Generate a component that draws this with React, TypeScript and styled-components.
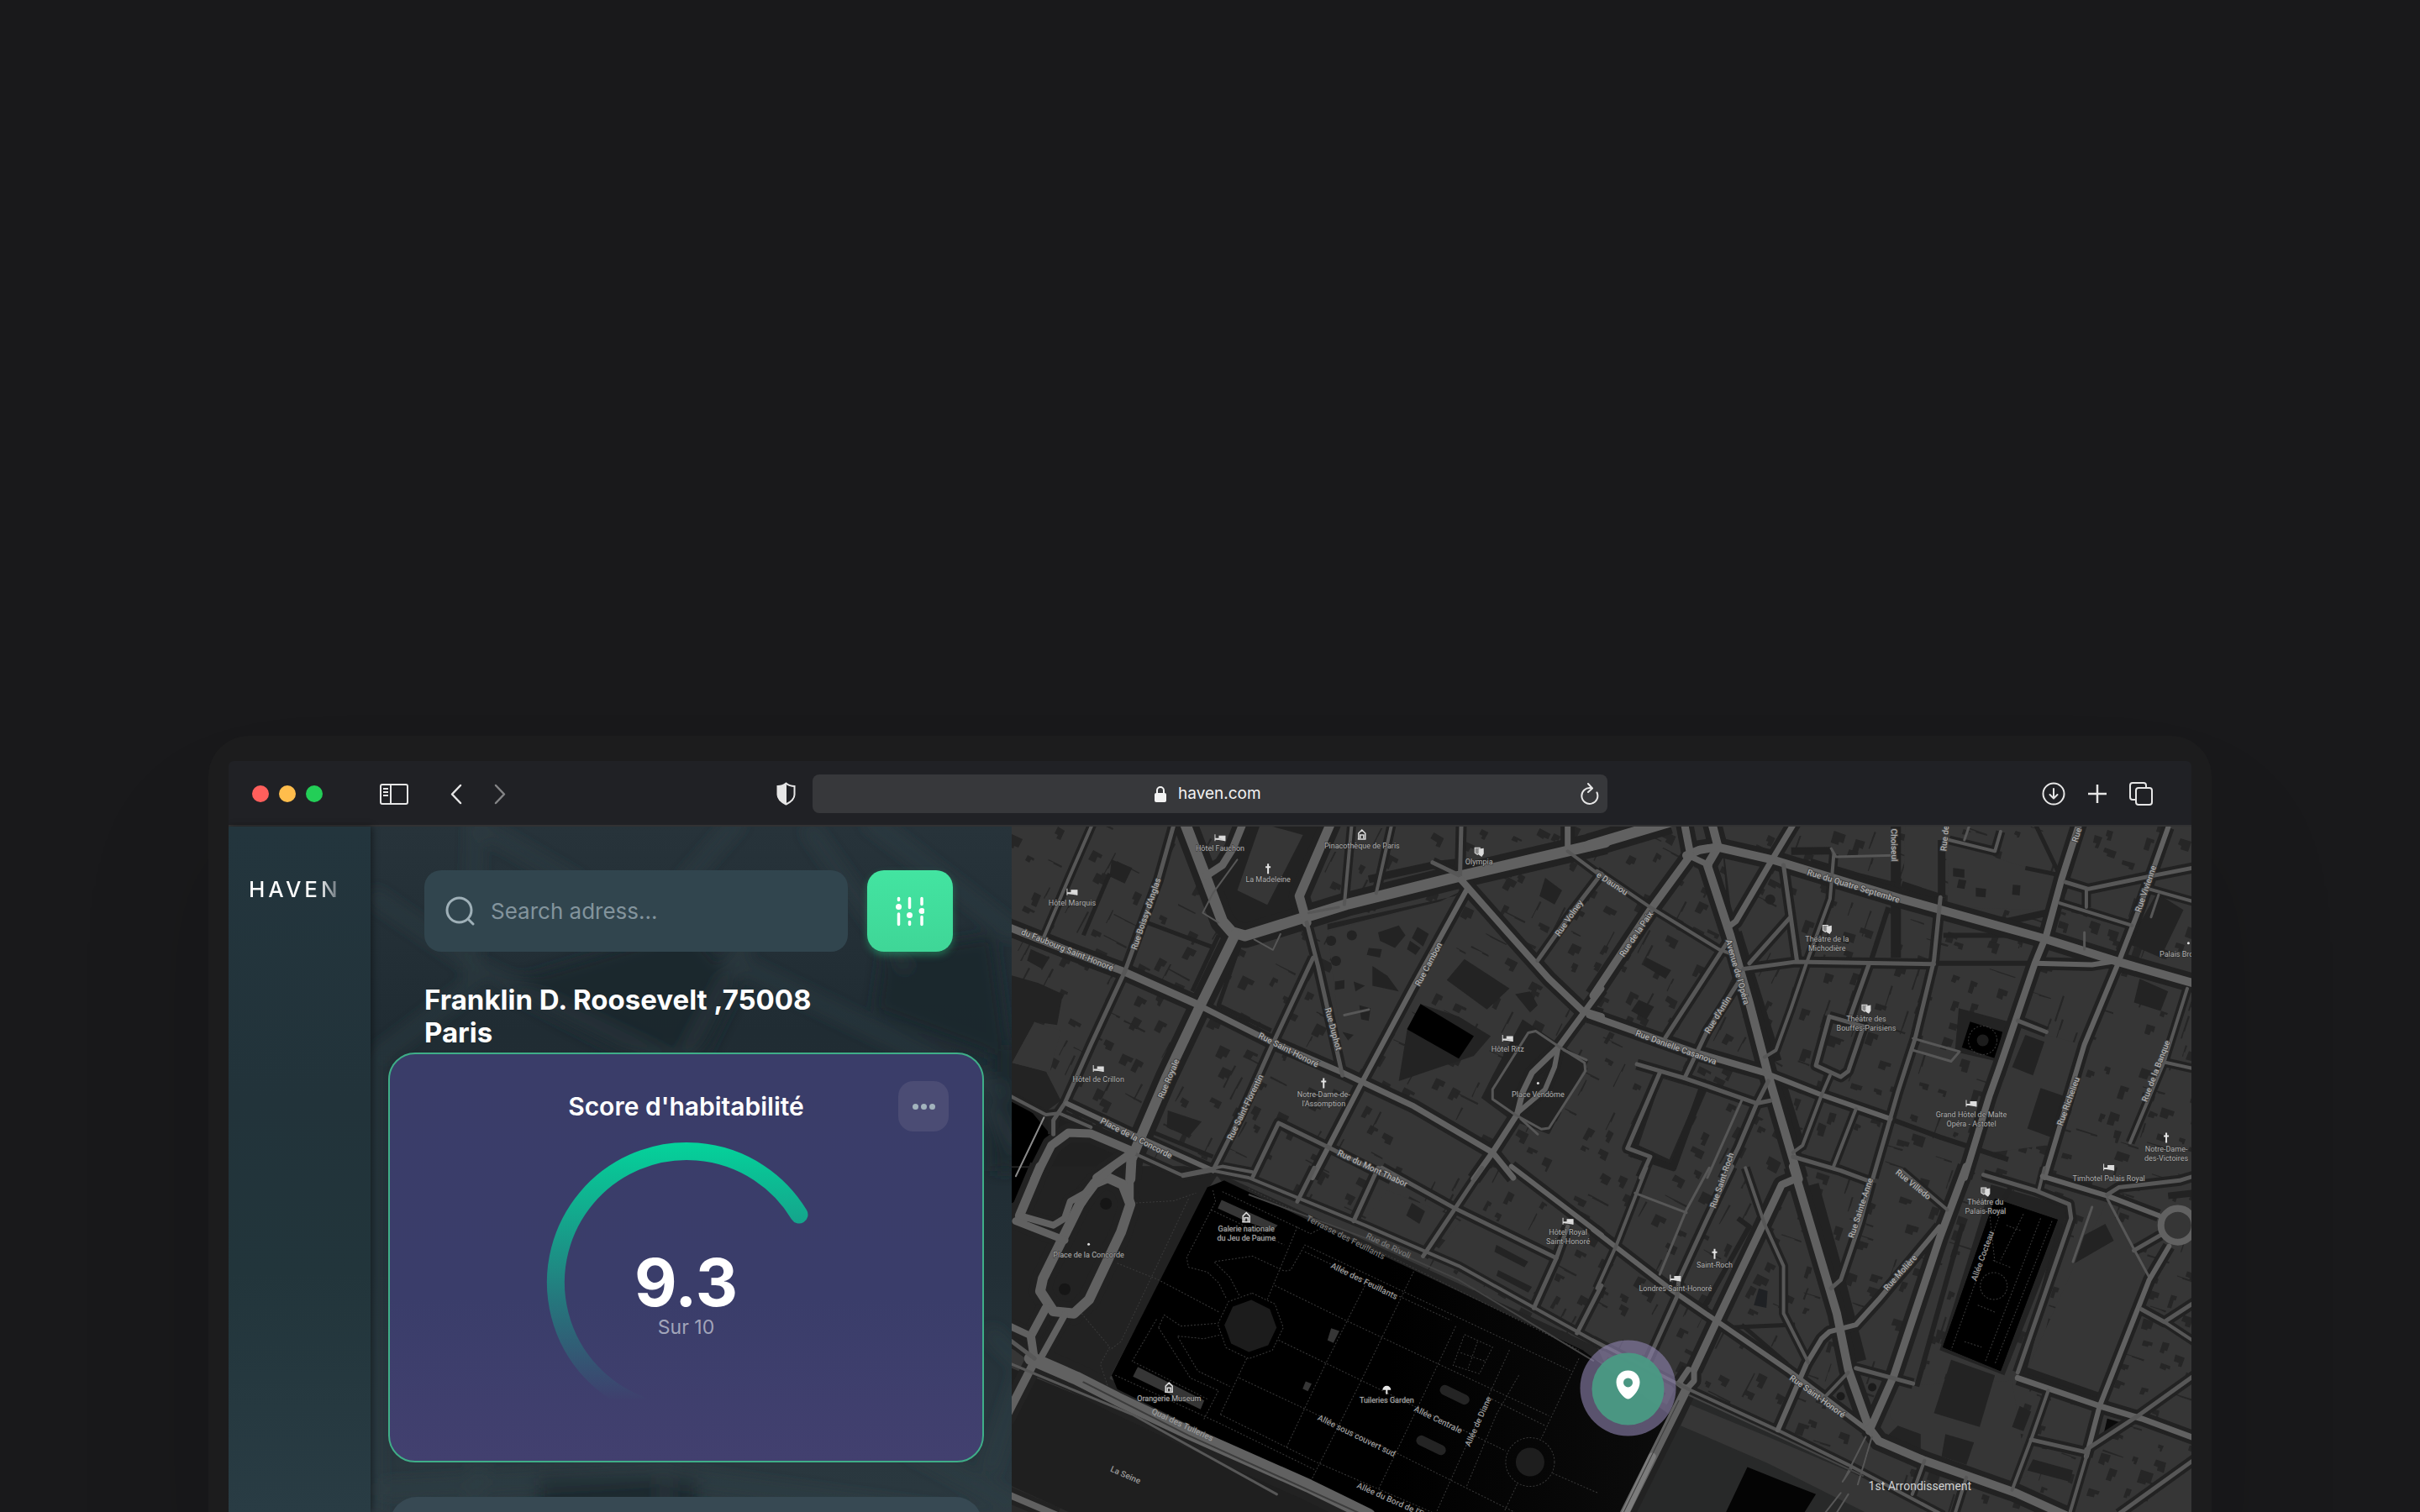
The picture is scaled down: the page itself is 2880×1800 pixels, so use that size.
import React from "react";
import styled, { createGlobalStyle } from "styled-components";

const GlobalStyle = createGlobalStyle`
  *, *::before, *::after { box-sizing: border-box; }
  body {
    margin: 0;
    background: #19191b;
    color: #ffffff;
    font-family: Inter, "Liberation Sans", sans-serif;
  }
`;

/* ---------- Page and window ---------- */

const Stage = styled.main`
  display: flex;
  flex-direction: column;
  height: 100vh;
  padding: 876px 248px 0;
  overflow: hidden;
`;

const Bezel = styled.div`
  display: flex;
  flex: 1;
  min-height: 0;
  padding: 30px 24px 0;
  border-radius: 48px 48px 0 0;
  background: #1c1c1d;
  box-shadow: 0 120px 160px rgba(0, 0, 0, 0.14);
`;

const Browser = styled.div`
  display: flex;
  flex: 1;
  flex-direction: column;
  min-width: 0;
  overflow: hidden;
  border-radius: 6px 6px 0 0;
  background: #202125;
`;

const Toolbar = styled.header`
  display: grid;
  grid-template-columns: minmax(0, 1fr) minmax(0, 946px) minmax(0, 1fr);
  align-items: center;
  flex: none;
  height: 78px;
  padding-top: 2px;
  border-bottom: 2px solid #323233;
`;

const ToolbarLeft = styled.div`
  display: flex;
  align-items: center;
  padding: 0 20px 0 28px;
`;

const ToolbarRight = styled.div`
  display: flex;
  align-items: center;
  justify-content: flex-end;
  gap: 26px;
  padding-right: 46px;
`;

const Lights = styled.div`
  display: flex;
  gap: 12px;
  margin-right: 68px;
`;

const Light = styled.button<{ $color: string }>`
  width: 20px;
  height: 20px;
  padding: 0;
  border: 0;
  border-radius: 50%;
  background: ${(p) => p.$color};
`;

const NavButtons = styled.div`
  display: flex;
  gap: 38px;
  margin: 0 auto 0 50px;
`;

const IconButton = styled.button<{ $dim?: boolean }>`
  display: flex;
  padding: 0;
  border: 0;
  background: none;
  color: #e6e6e6;
  opacity: ${(p) => (p.$dim ? 0.5 : 1)};
`;

const AddressBar = styled.div`
  display: grid;
  grid-template-columns: 1fr auto 1fr;
  align-items: center;
  height: 46px;
  padding: 0 10px;
  border-radius: 8px;
  background: #37383b;
`;

const AddressLabel = styled.label`
  display: flex;
  grid-column: 2;
  align-items: center;
  gap: 14px;
  color: #f2f2f2;
`;

const AddressInput = styled.input`
  width: 104px;
  padding: 0;
  border: 0;
  outline: 0;
  background: none;
  color: #f2f2f2;
  font: 400 19px/26px Inter, "Liberation Sans", sans-serif;
`;

const ReloadSlot = styled.div`
  display: flex;
  justify-content: flex-end;
`;

/* ---------- Application ---------- */

const AppShell = styled.div`
  display: grid;
  grid-template-columns: 169px minmax(0, 763px) minmax(0, 1fr);
  flex: 1;
  min-height: 0;
  background: #232323;
`;

const Sidebar = styled.nav`
  z-index: 1;
  padding: 59px 0 0 24px;
  background: linear-gradient(#23353d, #22333a 40%, #22353b 65%, #293c44);
  box-shadow: 2px 0 8px rgba(0, 0, 0, 0.45);
`;

const Brand = styled.a`
  display: inline-block;
  background: linear-gradient(90deg, #ffffff 75%, #4f5c65);
  background-clip: text;
  color: transparent;
  font-size: 26px;
  font-weight: 500;
  line-height: 32px;
  letter-spacing: 4px;
  text-decoration: none;
`;

const Panel = styled.section`
  display: grid;
  grid-template-columns: minmax(0, 1fr);
  min-width: 0;
  min-height: 0;
  overflow: hidden;
  background: linear-gradient(#27333a, #202c33 30%, #222f36 65%, #2b3940);
`;

const Backdrop = styled.svg`
  grid-area: 1 / 1;
  width: 100%;
  height: 816px;
`;

const PanelBody = styled.div`
  z-index: 1;
  grid-area: 1 / 1;
  min-width: 0;
  padding: 52px 33px 0 21px;
`;

const SearchRow = styled.form`
  display: flex;
  gap: 23px;
  padding: 0 37px 0 43px;
`;

const SearchField = styled.label`
  display: flex;
  flex: 1;
  align-items: center;
  gap: 19px;
  min-width: 0;
  height: 97px;
  padding: 0 25px;
  border-radius: 20px;
  background: #31454e;
  color: #9fb0b8;
`;

const SearchInput = styled.input`
  flex: 1;
  min-width: 0;
  padding: 0;
  border: 0;
  outline: 0;
  background: none;
  color: #ffffff;
  font: 400 26px/32px Inter, "Liberation Sans", sans-serif;

  &::placeholder {
    color: #83949d;
    opacity: 1;
  }
`;

const FilterButton = styled.button`
  display: flex;
  align-items: center;
  justify-content: center;
  width: 102px;
  height: 97px;
  padding: 0;
  border: 0;
  border-radius: 20px;
  background: linear-gradient(#43e4a1, #3fd697);
  box-shadow: 0 4px 8px rgba(40, 200, 130, 0.4);
`;

const Address = styled.h1`
  max-width: 504px;
  margin: 38px 0 4px 43px;
  font-size: 33px;
  font-weight: 700;
  line-height: 39px;
`;

const ScoreCard = styled.article`
  display: flex;
  flex-direction: column;
  align-items: center;
  height: 488px;
  border: 2px solid #3fae88;
  border-radius: 32px;
  background: linear-gradient(#3a3d69, #3a3d6a 60%, #42406f);
`;

const CardHeader = styled.div`
  display: grid;
  grid-template-columns: 60px 1fr 60px;
  align-items: center;
  align-self: stretch;
  padding: 32px 40px 12px;
`;

const CardTitle = styled.h2`
  grid-column: 2;
  margin: 0;
  font-size: 30px;
  font-weight: 600;
  line-height: 36px;
  text-align: center;
`;

const MoreButton = styled.button`
  display: flex;
  align-items: center;
  justify-content: center;
  gap: 3px;
  height: 60px;
  padding: 0;
  border: 0;
  border-radius: 18px;
  background: #4b4c74;
`;

const Dot = styled.span`
  width: 7px;
  height: 7px;
  border-radius: 50%;
  background: #a3b4bd;
`;

const GaugeArea = styled.div`
  display: grid;
  justify-items: center;
`;

const GaugeArc = styled.svg`
  grid-area: 1 / 1;
  width: 334px;
  height: 334px;
`;

const Readout = styled.div`
  display: flex;
  grid-area: 1 / 1;
  flex-direction: column;
  align-items: center;
  padding-top: 128px;
`;

const ScoreValue = styled.strong`
  font-size: 78px;
  font-weight: 700;
  line-height: 80px;
`;

const ScoreScale = styled.span`
  color: #a2a5ba;
  font-size: 23px;
  line-height: 26px;
`;

const NextCard = styled.article`
  height: 240px;
  margin: 41px 2px 0;
  border-radius: 32px;
  background: #374953;
`;

const MapCanvas = styled.svg`
  display: block;
  width: 100%;
  height: 816px;
`;

const StreetText = styled.text<{ $faint?: boolean }>`
  fill: ${(p) => (p.$faint ? "#747474" : "#aeaeae")};
  stroke: ${(p) => (p.$faint ? "none" : "#404040")};
  stroke-width: 2px;
  paint-order: stroke;
  font: 500 10px Roboto, "Liberation Sans", sans-serif;
  text-anchor: middle;
`;

const ParkText = styled(StreetText)`
  fill: #9a9a9a;
  stroke: none;
`;

const PlaceText = styled.text`
  fill: #b0b0b0;
  stroke: #2a2a2a;
  stroke-width: 1px;
  paint-order: stroke;
  font: 400 9px Roboto, "Liberation Sans", sans-serif;
  text-anchor: middle;
`;

const DistrictText = styled.text`
  fill: #d2d2d2;
  font: 400 14px Roboto, "Liberation Sans", sans-serif;
  text-anchor: middle;
`;

/* ---------- Map data ---------- */

type Tile = "A" | "B" | "C" | "D";

/* Each quarter of the map keeps its own grid: origin and units per pixel. */
const tiles: Record<Tile, { x: number; y: number; sx: number }> = {
  A: { x: -4, y: -4, sx: 2.24 },
  B: { x: 696, y: -4, sx: 2.208 },
  C: { x: -4, y: 406, sx: 2.24 },
  D: { x: 696, y: 406, sx: 2.208 },
};

const project = (tile: Tile, x: number, y: number): [number, number] => {
  const t = tiles[tile];
  return [Math.round((t.x + x / t.sx) * 10) / 10, Math.round((t.y + y / 3) * 10) / 10];
};

const points = (tile: Tile, list: string) =>
  list
    .split(" ")
    .map((pair) => {
      const [x, y] = pair.split(",").map(Number);
      return project(tile, x, y).join(",");
    })
    .join(" ");

const roads: [Tile, number, string][] = [
  ["A", 13, "1590,68 1200,190 900,290 630,402 595,388 570,350 525,190 465,-20"],
  ["A", 11, "862,-10 775,260 795,355"],
  ["A", 9, "628,-10 598,90 570,150 525,190"],
  ["A", 12, "605,395 510,655 420,910 340,1160 328,1200 325,1270"],
  ["A", 9, "-10,365 150,450 300,525 510,650"],
  ["A", 7, "510,652 700,780 890,890 1080,1010 1290,1175 1345,1265"],
  ["A", 5, "795,355 825,510 890,900"],
  ["A", 6, "1220,240 1080,580 940,930 810,1265"],
  ["A", 5, "1207,-10 1203,195"],
  ["A", 8, "1205,200 1330,390 1440,555 1530,670 1580,690"],
  ["A", 7, "1580,590 1465,800 1395,890 1370,960 1355,1040 1290,1175 1240,1270"],
  ["A", 6, "1465,800 1455,870 1430,950 1355,1035"],
  ["A", 3, "1385,748 1405,742 1470,800 1535,855 1537,885 1440,1088 1420,1092 1350,1040 1290,985 1290,950 1385,748"],
  ["A", 3, "1365,1055 1410,1110"],
  ["A", 3, "1480,810 1540,845"],
  ["A", 5, "1580,180 1500,320 1410,490"],
  ["A", 4, "225,0 160,200 95,405"],
  ["A", 5, "442,0 400,200 310,530 220,790 150,1000 120,1060 120,1110"],
  ["A", 4, "915,0 895,290"],
  ["A", 4, "1022,0 980,250"],
  ["A", 5, "812,480 700,800 620,1040 545,1240"],
  ["A", 4, "0,970 100,1040 135,1035 220,1085"],
  ["A", 6, "155,1000 330,1110 545,1240"],
  ["A", 10, "70,1270 115,1150 160,1105 220,1108 330,1170"],
  ["A", 4, "330,1175 460,1255 570,1225 650,1245"],
  ["A", 10, "330,1175 235,1265"],
  ["A", 5, "650,1265 720,1070 850,1155 1020,1270"],
  ["A", 2, "610,130 545,250 518,320 560,355"],
  ["A", 2, "655,415 705,452 725,395"],
  ["A", 7, "1490,0 1490,90"],
  ["A", 4, "1490,100 1580,190"],
  ["A", 5, "1130,140 1200,185"],
  ["A", 3, "895,685 960,665"],
  ["A", 3, "800,320 880,300"],
  ["B", 10, "300,-10 318,85 290,150 350,400 400,640 450,900 530,1270"],
  ["B", 13, "-20,80 190,-5"],
  ["B", 10, "235,115 270,95 315,85 460,130 800,270 1170,410 1370,495 1590,580"],
  ["B", 9, "228,-10 245,110"],
  ["B", 7, "240,115 295,150"],
  ["B", 9, "245,115 140,310 -10,615"],
  ["B", 7, "520,-5 460,130 365,350 345,370"],
  ["B", 4, "0,170 140,300 320,450 350,465"],
  ["B", 8, "-20,685 250,815 440,890"],
  ["B", 6, "440,890 590,970 770,1055"],
  ["B", 5, "490,150 525,490"],
  ["B", 5, "505,340 400,500"],
  ["B", 5, "385,520 520,495 885,503"],
  ["B", 6, "1150,500 1300,505 1370,490"],
  ["B", 5, "340,430 180,765"],
  ["B", 5, "375,560 290,740 230,910"],
  ["B", 4, "622,110 612,270 550,500 510,660 470,810 440,835"],
  ["B", 5, "715,500 665,690"],
  ["B", 5, "610,690 700,725 660,885 640,905 575,865 610,690"],
  ["B", 4, "612,900 590,970 540,1150 515,1175"],
  ["B", 5, "902,265 885,490 835,770 790,960 770,1055 725,1265"],
  ["B", 8, "1268,-5 1220,200 1180,400 1150,500 1060,860 1030,975 965,1265"],
  ["B", 6, "1500,15 1420,320 1370,495 1280,790 1175,1265"],
  ["B", 5, "1230,210 1290,235 1450,190 1580,155"],
  ["B", 4, "1285,235 1285,300"],
  ["B", 4, "1215,285 1405,365"],
  ["B", 4, "1450,235 1580,285"],
  ["B", 3, "1475,255 1455,335"],
  ["B", 5, "1105,705 1180,745"],
  ["B", 4, "1550,590 1490,850 1400,1140"],
  ["B", 4, "1480,850 1580,880"],
  ["B", 5, "105,860 230,910 420,1000 455,990"],
  ["B", 5, "165,890 80,1160 140,1190 115,1265"],
  ["B", 5, "450,920 420,1000 370,1160 330,1270"],
  ["B", 3, "380,990 290,1265"],
  ["B", 4, "680,1020 620,1230"],
  ["B", 5, "515,1190 640,1240 720,1280"],
  ["B", 3, "830,768 952,815 930,850 830,810"],
  ["B", 4, "925,60 1045,100 1060,30"],
  ["B", 3, "980,0 965,60"],
  ["B", 3, "615,90 628,120 780,115"],
  ["B", 3, "1280,390 1280,450"],
  ["C", 12, "205,100 230,55 265,35 305,60 325,130 300,230 215,470 175,520 120,512 85,440 92,395 190,130 205,100"],
  ["C", 8, "325,-5 325,130"],
  ["C", 11, "85,-5 30,170 40,180"],
  ["C", 8, "30,170 120,205 150,180 165,120 205,90 280,-5"],
  ["C", 9, "20,190 150,258"],
  ["C", 10, "100,500 60,600 70,690 -10,900"],
  ["C", 8, "150,525 90,670"],
  ["C", 16, "60,680 180,750 290,825 480,945 800,1135 960,1240"],
  ["C", 8, "-20,550 60,600"],
  ["C", 5, "-10,600 70,680"],
  ["C", 3, "-10,690 330,880 715,1165"],
  ["C", 8, "-10,1160 130,1240"],
  ["C", 4, "465,30 545,10 640,35 950,205 1200,350 1590,640"],
  ["C", 5, "995,0 1190,145 1460,322"],
  ["C", 5, "815,0 770,120"],
  ["C", 5, "985,0 920,190"],
  ["C", 5, "1262,0 1190,145 1105,315"],
  ["C", 6, "1340,-5 1580,240"],
  ["C", 5, "1490,210 1460,322 1400,500"],
  ["C", 5, "1580,420 1515,590"],
  ["D", 6, "-10,220 200,440 500,720 715,940"],
  ["D", 9, "520,40 485,60 440,190 310,560 255,720"],
  ["D", 7, "255,720 255,760 235,790 215,770 240,720"],
  ["D", 11, "235,790 70,1240"],
  ["D", 4, "-10,615 240,790 480,940 660,1060 910,1240"],
  ["D", 10, "515,-5 630,520 660,720 715,930"],
  ["D", 10, "715,930 740,975 860,1045 1100,1160 1230,1240"],
  ["D", 9, "970,-5 900,250 780,740 715,940"],
  ["D", 6, "900,210 740,470 680,560 610,585 590,610 550,700 475,935"],
  ["D", 5, "720,50 690,200 640,400 615,430"],
  ["D", 4, "390,0 440,200 490,350 490,520 555,695"],
  ["D", 5, "355,-5 290,180 215,400 210,460 130,700"],
  ["D", 4, "130,0 50,280 0,430"],
  ["D", 3, "295,0 235,150 165,380"],
  ["D", 3, "100,90 235,160"],
  ["D", 5, "680,715 830,770"],
  ["D", 4, "660,730 590,830"],
  ["D", 5, "1015,25 1150,80 1240,130 1245,180 1105,730"],
  ["D", 7, "1105,750 1320,850 1430,895 1590,975"],
  ["D", 4, "1175,0 1160,80"],
  ["D", 6, "1170,30 1340,100 1475,170"],
  ["D", 3, "1340,110 1410,290 1450,390"],
  ["D", 5, "1340,95 1370,70 1530,45 1590,20"],
  ["D", 5, "1480,240 1410,295"],
  ["D", 6, "1502,280 1450,400 1320,850 1285,1030"],
  ["D", 5, "1580,470 1490,550 1430,505"],
  ["D", 4, "1490,550 1580,630"],
  ["D", 5, "1580,730 1415,890 1285,1005"],
  ["D", 4, "1185,795 1140,970 1090,1150"],
  ["D", 5, "1140,970 1285,1015"],
  ["D", 5, "1580,1030 1370,1235"],
  ["D", 4, "1290,1010 1240,1240"],
  ["D", 4, "860,1045 828,1165"],
  ["D", 4, "970,1105 940,1235"],
  ["D", 2, "722,960 685,1130"],
  ["D", 2, "706,960 650,1110"],
  ["D", 2, "670,1070 645,1120"],
  ["D", 2, "640,1160 600,1230"],
  ["D", 2, "660,1165 630,1230"],
  ["D", 4, "800,10 920,150"],
  ["D", 3, "1300,140 1250,335"],
];

const lanes: [Tile, number, string][] = [
  ["B", 12, "785,0 785,480"],
  ["B", 9, "905,60 905,265"],
  ["B", 9, "510,100 615,98"],
  ["B", 10, "560,140 680,190 780,225"],
  ["B", 9, "800,220 900,265"],
  ["B", 8, "915,320 1080,350 1180,320"],
  ["B", 6, "885,500 1150,500"],
  ["B", 6, "910,400 1150,400"],
  ["B", 6, "765,300 720,490"],
  ["B", 5, "1125,160 1215,185 1150,0"],
  ["B", 14, "365,390 470,850"],
  ["B", 14, "480,920 535,1170"],
  ["D", 16, "565,60 640,430 690,690"],
  ["B", 6, "770,1055 900,1120 1080,1200"],
  ["B", 8, "275,950 200,1230 90,1180"],
  ["D", 5, "1200,30 1330,90"],
  ["D", 8, "1220,200 1120,720 1330,820"],
  ["D", 6, "960,200 840,780"],
  ["D", 6, "370,180 400,210 280,500"],
  ["A", 5, "480,680 380,1100 545,1190"],
  ["A", 9, "960,200 1130,150 1195,140"],
  ["A", 5, "270,180 200,400"],
  ["A", 5, "360,350 540,440"],
  ["A", 5, "560,400 490,600"],
  ["A", 5, "620,420 560,650 700,740"],
  ["D", 6, "1010,30 1090,60 1070,110"],
  ["D", 5, "380,560 500,700"],
  ["D", 5, "340,570 520,560"],
  ["D", 8, "1500,100 1568,90"],
];

const shapes: [Tile, string, string][] = [
  ["A", "#232323", "0,540 80,570 145,610 130,720 70,708 10,855 100,885 140,990 100,1030 0,960"],
  ["A", "#363636", "70,710 140,740 110,890 10,855"],
  ["A", "#222222", "640,0 850,0 770,260 790,345 640,390 600,375 540,210 600,140"],
  ["A", "#363636", "672,0 785,42 690,292 610,240"],
  ["A", "#363636", "850,385 1195,265 930,900 895,880"],
  ["A", "#232323", "1215,485 1335,590 1275,665 1168,560"],
  ["A", "#232323", "985,390 1040,365 1058,400 1030,445 990,420"],
  ["A", "#232323", "1090,370 1120,395 1105,440 1075,410"],
  ["A", "#232323", "1070,420 1098,445 1085,470 1062,450"],
  ["A", "#232323", "960,445 995,450 990,480 955,470"],
  ["A", "#232323", "870,565 895,560 895,590 870,595"],
  ["A", "#232323", "920,565 950,580 925,600"],
  ["A", "#232323", "935,650 965,660 960,705 940,700"],
  ["A", "#232323", "890,745 920,755 905,775"],
  ["A", "#232323", "425,1025 515,1065 480,1120 422,1085"],
  ["A", "#232323", "970,510 1010,545 1040,600 970,580"],
  ["A", "#232323", "1098,645 1200,690 1285,760 1240,830 1040,920 1062,740"],
  ["A", "#000000", "1098,645 1240,760 1200,840 1062,735"],
  ["A", "#232323", "1370,700 1470,790 1545,850 1440,1110 1340,1060 1260,980 1290,900"],
  ["A", "#232323", "850,380 1150,280 1210,240 1190,260 850,360"],
  ["A", "#232323", "1350,610 1390,600 1410,650 1390,675"],
  ["A", "#232323", "1430,195 1475,240 1455,290 1415,260"],
  ["A", "#232323", "60,450 110,480 90,520 50,490"],
  ["A", "#232323", "275,130 330,160 310,215 270,190"],
  ["A", "#202020", "0,970 120,1040 215,1100 330,1165 330,1270 0,1270"],
  ["A", "#000000", "0,975 65,1035 115,1115 65,1270 0,1270"],
  ["B", "#363636", "1110,730 1275,790 1180,1150 1010,1180"],
  ["B", "#232323", "1125,755 1175,780 1145,900 1090,870"],
  ["B", "#232323", "1165,945 1250,985 1190,1120 1130,1090"],
  ["B", "#232323", "1470,250 1540,310 1480,480 1395,430"],
  ["B", "#232323", "1425,555 1500,600 1480,670 1410,640"],
  ["B", "#363636", "810,0 905,0 900,250 805,215"],
  ["B", "#363636", "925,70 1200,190 1180,310 920,300"],
  ["B", "#232323", "935,160 965,165 965,195 935,190"],
  ["B", "#232323", "950,200 970,205 965,235 945,230"],
  ["B", "#232323", "995,230 1022,235 1020,265 995,262"],
  ["B", "#232323", "1092,220 1112,222 1110,258 1090,255"],
  ["B", "#232323", "150,900 290,950 200,1230 90,1170"],
  ["B", "#363636", "170,910 270,950 190,1200 110,1150"],
  ["B", "#232323", "950,660 1085,710 1050,850 940,815"],
  ["B", "#000000", "980,708 1065,745 1048,840 958,800"],
  ["B", "#232323", "110,630 150,655 130,700 90,670"],
  ["B", "#232323", "130,480 195,525 180,555 120,505"],
  ["B", "#232323", "330,90 420,120 460,140 345,350"],
  ["B", "#363636", "335,120 440,155 355,340"],
  ["C", "#222222", "0,-6 470,-6 560,20 530,80 270,750 280,800 0,640"],
  ["C", "#000000", "0,0 60,0 20,120 0,130"],
  ["C", "#242424", "545,10 1568,640 1590,700 575,60"],
  ["C", "#1f1f1f", "0,710 330,890 900,1240 0,1240"],
  ["C", "#2a2a2a", "0,1130 180,1240 0,1240"],
  ["C", "#363636", "1010,80 1170,165 1090,290 940,200"],
  ["C", "#232323", "1075,125 1110,155 1095,200 1060,170"],
  ["C", "#363636", "1210,180 1450,330 1385,480 1125,325"],
  ["C", "#232323", "1300,275 1385,335 1375,355 1295,300"],
  ["C", "#232323", "1305,365 1395,425 1385,445 1300,385"],
  ["D", "#282929", "235,800 480,940 910,1240 75,1240"],
  ["D", "#363636", "245,845 440,955 760,1140 900,1240 720,1240 450,1055 220,920"],
  ["D", "#040404", "395,1068 490,1120 575,1165 540,1240 335,1240"],
  ["D", "#363636", "775,780 1090,760 1130,1100 1050,1130 870,1030 770,890"],
  ["D", "#232323", "930,685 1045,740 1005,925 885,875"],
  ["D", "#232323", "915,950 990,980 970,1060 905,1030"],
  ["D", "#232323", "1145,1040 1250,1080 1240,1120 1130,1080"],
  ["D", "#232323", "1110,850 1140,870 1120,940 1090,925"],
  ["D", "#232323", "1035,60 1240,140 1215,240 1070,740 900,650"],
  ["D", "#000000", "1045,110 1210,185 1060,725 908,640"],
  ["D", "#363636", "1260,330 1340,120 1440,400 1320,815 1130,720"],
  ["D", "#232323", "1335,200 1357,260 1255,340 1280,240"],
  ["D", "#0a0a0a", "1340,895 1378,910 1330,952"],
  ["D", "#232323", "730,1000 790,920 850,950 850,1030"],
  ["D", "#1f2124", "425,430 448,440 445,500 412,490"],
];

const parkPaths: [Tile, string][] = [
  ["C", "545,80 552,120 475,320 480,355 530,372 560,410 582,470"],
  ["C", "615,455 590,390 548,335 650,315 735,368 752,365 790,275 1500,725"],
  ["C", "570,85 805,235 830,218"],
  ["C", "540,150 735,275"],
  ["C", "770,210 690,470"],
  ["C", "290,340 400,400 562,515"],
  ["C", "710,420 900,545 1145,700 1440,885"],
  ["C", "720,615 935,755 1325,1010"],
  ["C", "615,750 790,860 1030,1015 1350,1230"],
  ["C", "565,880 820,1050 1130,1230"],
  ["C", "635,680 565,880"],
  ["C", "950,420 845,700 740,1000"],
  ["C", "1080,370 940,760 805,1120"],
  ["C", "1192,565 1110,800 985,1150"],
  ["C", "1335,650 1260,870 1140,1230"],
  ["C", "1520,680 1420,965"],
  ["C", "1360,740 1300,880 1220,1140"],
  ["C", "1280,820 1430,920"],
  ["C", "1355,1130 1320,1230"],
  ["C", "1450,1090 1570,1160"],
  ["C", "400,570 415,525 460,565 555,555"],
  ["C", "562,597 520,610 450,600 505,725 590,780"],
  ["C", "395,540 330,690 530,825"],
  ["C", "400,570 485,750 560,795 520,900"],
  ["C", "285,740 560,910 820,1080"],
  ["C", "1215,595 1290,640 1255,735 1185,705 1215,595"],
  ["C", "1205,660 1270,690"],
  ["C", "1250,620 1225,715"],
  ["C", "790,300 1060,470 1180,545"],
  ["D", "1065,140 930,650"],
  ["D", "1120,165 1060,330"],
  ["D", "1165,180 1020,690"],
  ["D", "1195,190 1045,700"],
  ["D", "1075,205 1115,225"],
  ["D", "1040,330 1085,355"],
  ["D", "1000,490 1045,515"],
  ["D", "965,620 1010,640"],
  ["D", "1030,150 1045,340"],
];

const parkShapes: [string, string][] = [
  ["#363636", "345,710 522,830 512,862 332,745"],
  ["#363636", "568,115 718,205 702,225 640,195 558,145"],
  ["#363636", "860,572 882,582 866,625 850,615"],
  ["#363636", "792,762 808,770 798,797 784,788"],
];

type StreetKind = "street" | "faint" | "park";

const streets: [Tile, number, number, number, number, string, StreetKind?][] = [
  ["A", 20, 378, 295, 527, "du Faubourg Saint-Honoré"],
  ["A", 335, 450, 400, 200, "Rue Boissy d'Anglas"],
  ["A", 405, 985, 450, 840, "Rue Royale"],
  ["A", 590, 1130, 672, 900, "Rue Saint-Florentin"],
  ["A", 665, 755, 825, 862, "Rue Saint-Honoré"],
  ["A", 850, 660, 880, 810, "Rue Duphot"],
  ["A", 1090, 580, 1150, 430, "Rue Cambon"],
  ["A", 1462, 400, 1525, 280, "Rue Volney"],
  ["A", 248, 1062, 432, 1187, "Place de la Concorde"],
  ["A", 880, 1175, 1060, 1290, "Rue du Mont Thabor"],
  ["B", 540, 170, 808, 280, "Rue du Quatre Septembre"],
  ["B", 62, 480, 145, 310, "Rue de la Paix"],
  ["B", 342, 405, 395, 655, "Avenue de l'Opéra"],
  ["B", 288, 750, 348, 620, "Rue d'Antin"],
  ["B", 88, 740, 325, 860, "Rue Danielle Casanova"],
  ["B", 778, 20, 780, 135, "Choiseul"],
  ["B", 910, 95, 916, 10, "Rue de"],
  ["B", 1252, 80, 1270, 5, "Rue"],
  ["B", 1422, 310, 1462, 155, "Rue Vivienne"],
  ["B", 1218, 1070, 1260, 915, "Rue Richelieu"],
  ["B", 1438, 990, 1498, 780, "Rue de la Banque"],
  ["B", 0, 180, 78, 250, "e Daunou"],
  ["C", 805, 185, 990, 312, "Terrasse des Feuillants", "faint"],
  ["C", 962, 245, 1065, 312, "Rue de Rivoli", "faint"],
  ["C", 870, 355, 1025, 455, "Allée des Feuillants", "park"],
  ["C", 392, 872, 535, 962, "Quai des Tuileries", "park"],
  ["C", 840, 900, 1015, 1012, "Allée sous couvert sud", "park"],
  ["C", 1090, 862, 1200, 935, "Allée Centrale", "park"],
  ["C", 1228, 980, 1278, 830, "Allée de Diane", "park"],
  ["C", 945, 1140, 1110, 1240, "Allée du Bord de l'Eau", "park"],
  ["D", 302, 150, 355, -60, "Rue Saint-Roch"],
  ["D", 668, 250, 718, 40, "Rue Sainte-Anne"],
  ["D", 757, 435, 835, 315, "Rue Molière"],
  ["D", 788, 12, 872, 105, "Rue Villedo"],
  ["D", 508, 748, 648, 885, "Rue Saint-Honoré"],
  ["D", 992, 390, 1033, 240, "Allée Cocteau", "park"],
];

type PlaceKind = "hotel" | "church" | "theatre" | "museum" | "park" | "spot";

const places: [Tile, number, number, PlaceKind, string[]][] = [
  ["A", 170, 245, "hotel", ["Hôtel Marquis"]],
  ["A", 564, 52, "hotel", ["Hôtel Fauchon"]],
  ["A", 692, 163, "church", ["La Madeleine"]],
  ["A", 942, 42, "museum", ["Pinacothèque de Paris"]],
  ["A", 1254, 100, "theatre", ["Olympia"]],
  ["A", 240, 875, "hotel", ["Hôtel de Crillon"]],
  ["A", 840, 928, "church", ["Notre-Dame-de-", "l'Assomption"]],
  ["A", 1330, 767, "hotel", ["Hôtel Ritz"]],
  ["A", 1411, 928, "spot", ["Place Vendôme"]],
  ["B", 604, 376, "theatre", ["Théâtre de la", "Michodière"]],
  ["B", 707, 660, "theatre", ["Théâtre des", "Bouffes-Parisiens"]],
  ["B", 983, 1000, "hotel", ["Grand Hôtel de Malte", "Opéra - Astotel"]],
  ["B", 1495, 1123, "church", ["Notre-Dame-", "des-Victoires"]],
  ["B", 1553, 428, "spot", ["Palais Brongniart"]],
  ["C", 634, 178, "museum", ["Galerie nationale", "du Jeu de Paume"]],
  ["C", 214, 273, "spot", ["Place de la Concorde"]],
  ["C", 428, 785, "museum", ["Orangerie Museum"]],
  ["C", 1008, 790, "park", ["Tuileries Garden"]],
  ["C", 1491, 190, "hotel", ["Hôtel Royal", "Saint-Honoré"]],
  ["D", 309, 307, "church", ["Saint-Roch"]],
  ["D", 206, 393, "hotel", ["Londres Saint-Honoré"]],
  ["D", 1020, 83, "theatre", ["Théâtre du", "Palais-Royal"]],
  ["D", 1344, -2, "hotel", ["Timhotel Palais Royal"]],
];

/* Small building footprints, scattered with a fixed seed so every render agrees. */
const buildings = (() => {
  let seed = 41;
  const next = () => {
    seed = (seed * 16807) % 2147483647;
    return seed / 2147483647;
  };
  const list: string[] = [];
  for (let gx = 0; gx < 1403; gx += 29) {
    for (let gy = 0; gy < 816; gy += 27) {
      const x = gx + next() * 22;
      const y = gy + next() * 22;
      const thin = next() < 0.35;
      const w = thin ? 2 : 6 + next() * 10;
      const h = thin ? 12 + next() * 20 : 6 + next() * 10;
      const angle = ((gx < 900 ? 27 : 18) + (next() < 0.4 ? 90 : 0)) * (Math.PI / 180);
      const notch = next() * 0.5 + 0.3;
      if (next() < 0.18) continue;
      const corners = [[0, 0], [w, 0], [w, h * notch], [w * 0.65, h * notch], [w * 0.65, h], [0, h]];
      list.push(
        corners
          .map(([cx, cy]) =>
            [
              Math.round(x + cx * Math.cos(angle) - cy * Math.sin(angle)),
              Math.round(y + cx * Math.sin(angle) + cy * Math.cos(angle)),
            ].join(","),
          )
          .join(" "),
      );
    }
  }
  return list;
})();

const octagon = (cx: number, cy: number, r: number) =>
  Array.from({ length: 8 }, (_, i) => {
    const a = (i * Math.PI) / 4 + 0.05;
    return `${Math.round(cx + r * Math.sin(a))},${Math.round(cy - r * Math.cos(a))}`;
  }).join(" ");

function PlaceIcon({ kind }: { kind: PlaceKind }) {
  switch (kind) {
    case "hotel":
      return <path d="M-6-4v8M-6 2h12v2M6 2v-4h-7v3h-5" fill="#dcdcdc" stroke="#dcdcdc" strokeWidth="1" />;
    case "church":
      return <path d="M0-6V6M-3-2H3" stroke="#e6e6e6" strokeWidth="2" fill="none" />;
    case "museum":
      return <path d="M-4 5V-2L0-6l4 4v7H-5M-2 4v-4h4v4" stroke="#dcdcdc" strokeWidth="1.5" fill="none" />;
    case "theatre":
      return (
        <g stroke="#dcdcdc" strokeWidth="1">
          <path d="M-5-4H1V2l-3 2-3-2z" fill="#8a8a8a" />
          <path d="M0-2l5-1v6L3 6 0 4z" fill="#dcdcdc" />
        </g>
      );
    case "park":
      return <path d="M-5 1a5 5 0 0 1 10 0zM-1 1v5h2v-5z" fill="#e6e6e6" />;
    default:
      return <circle r="1.5" fill="#e0e0e0" />;
  }
}

function CityMap() {
  const [octX, octY] = project("C", 645, 565);
  const [pondX, pondY] = project("C", 1390, 1050);
  const [ringX, ringY] = project("B", 1013, 775);
  const [plazaX, plazaY] = project("D", 1525, 205);
  const [royalX, royalY] = project("D", 1042, 422);
  const trees: [Tile, number, number, number, string][] = [
    ["A", 860, 420, 6, "#232323"],
    ["A", 915, 400, 6, "#232323"],
    ["A", 873, 492, 6, "#232323"],
    ["C", 260, 128, 7, "#161616"],
    ["C", 150, 433, 7, "#161616"],
    ["B", 455, 272, 6, "#232323"],
    ["D", 640, 815, 5, "#1b1b1b"],
    ["D", 723, 783, 5, "#1b1b1b"],
  ];
  return (
    <MapCanvas viewBox="0 0 1403 816" preserveAspectRatio="xMinYMin slice" role="img" aria-label="Carte de Paris">
      <defs>
        <linearGradient id="garden" x1="0" x2="1">
          <stop offset="0.5" stopColor="#000000" />
          <stop offset="1" stopColor="#0c0c0c" />
        </linearGradient>
      </defs>
      <rect width="1403" height="816" fill="#363636" />
      {buildings.map((p, i) => (
        <polygon key={i} points={p} fill="#262626" />
      ))}
      {shapes.map(([tile, color, p], i) => (
        <polygon key={i} points={points(tile, p)} fill={color} />
      ))}
      <g fill="none" stroke="#222222" strokeLinejoin="round">
        {lanes.map(([tile, width, p], i) => (
          <polyline key={i} points={points(tile, p)} strokeWidth={width} />
        ))}
        {roads
          .filter(([, width]) => width > 3)
          .map(([tile, width, p], i) => (
            <polyline key={i} points={points(tile, p)} strokeWidth={width * 2 + 3} />
          ))}
      </g>
      <polygon points={points("D", "1045,110 1210,185 1060,725 908,640")} fill="#000000" />
      <polygon
        points={points("C", "575,45 530,70 275,740 290,790 960,1235 1635,1235 1760,880 1530,650")}
        fill="url(#garden)"
      />
      <g fill="none" stroke="#3a3a3a" strokeWidth="1" strokeDasharray="2 2">
        {parkPaths.map(([tile, p], i) => (
          <polyline key={i} points={points(tile, p)} />
        ))}
        <polygon points={octagon(octX, octY, 39)} />
        <circle cx={pondX} cy={pondY} r="29" />
        <circle cx={royalX} cy={royalY} r="16" />
        <circle cx={ringX} cy={ringY} r="17" />
        <polyline points={points("C", "640,75 1060,345 1520,650")} />
        <polyline points={points("C", "340,125 440,118 500,90")} />
        <polyline points={points("C", "195,520 270,640 245,700 265,780")} />
        <polyline points={points("C", "480,110 300,620 270,650")} />
      </g>
      <polygon points={octagon(octX, octY, 31)} fill="#1c1c1c" />
      <circle cx={pondX} cy={pondY} r="17" fill="#1e1e1e" />
      <circle cx={ringX} cy={ringY} r="7" fill="#1c1c1c" />
      {parkShapes.map(([color, p], i) => (
        <polygon key={i} points={points("C", p)} fill={color} />
      ))}
      <g stroke="#242424" strokeWidth="12" strokeLinecap="round">
        <polyline points={points("C", "1163,793 1215,827")} />
        <polyline points={points("C", "1100,973 1152,1007")} />
      </g>
      <g fill="none" stroke="#616161" strokeLinejoin="round" strokeLinecap="round">
        {roads.map(([tile, width, p], i) => (
          <polyline key={i} points={points(tile, p)} strokeWidth={width} stroke={width < 6 ? "#575757" : undefined} />
        ))}
        <circle cx={plazaX} cy={plazaY} r="20" strokeWidth="8" />
        <polyline points={points("A", "95,1050 20,1260")} stroke="#8a8a8a" strokeWidth="2" />
        <polyline points={points("C", "200,765 480,955 940,1235")} stroke="#3c3c3c" strokeWidth="2" />
        <polyline points={points("D", "145,1030 75,1230")} stroke="#7c7c7c" strokeWidth="9" />
        <polyline points={points("D", "215,830 70,1230")} stroke="#3e3e3e" strokeWidth="1" />
      </g>
      <g fill="none" stroke="#444444">
        <polyline points={points("C", "640,95 950,250 1200,400 1560,690")} strokeWidth="2" />
        <polyline points={points("D", "240,810 480,960 700,1100")} strokeWidth="2" />
      </g>
      {trees.map(([tile, x, y, r, color], i) => {
        const [cx, cy] = project(tile, x, y);
        return <circle key={i} cx={cx} cy={cy} r={r} fill={color} />;
      })}
      {streets.map(([tile, x1, y1, x2, y2, name, kind], i) => {
        const [ax, ay] = project(tile, x1, y1);
        const [bx, by] = project(tile, x2, y2);
        const angle = Math.round((Math.atan2(by - ay, bx - ax) * 180) / Math.PI);
        const Label = kind === "park" ? ParkText : StreetText;
        return (
          <Label
            key={i}
            $faint={kind === "faint"}
            dy="3"
            transform={`translate(${Math.round((ax + bx) / 2)} ${Math.round((ay + by) / 2)}) rotate(${angle})`}
          >
            {name}
          </Label>
        );
      })}
      {places.map(([tile, x, y, kind, lines], i) => {
        const [px, py] = project(tile, x, y);
        return (
          <g key={i} transform={`translate(${px} ${py})`}>
            <PlaceIcon kind={kind} />
            <PlaceText>
              {lines.map((line, n) => (
                <tspan key={n} x="0" y={16 + n * 11}>
                  {line}
                </tspan>
              ))}
            </PlaceText>
          </g>
        );
      })}
      <ParkText dy="3" transform={`translate(${project("C", 312, 1097).join(" ")}) rotate(24)`}>
        La Seine
      </ParkText>
      <DistrictText x={project("D", 848, 0)[0]} y={project("D", 0, 1150)[1]}>
        1st Arrondissement
      </DistrictText>
      <g transform="translate(733 668)">
        <circle r="57" fill="#8d81ad" fillOpacity="0.62" />
        <circle r="43" cy="1" fill="#4a9983" fillOpacity="0.96" />
        <path
          d="M0-21c-8 0-14 6-14 14 0 9 8 17 11 19q3 2 6 0c3-2 11-10 11-19 0-8-6-14-14-14zm0 9a5 5 0 1 1 0 11 5 5 0 0 1 0-11z"
          fill="#ffffff"
        />
      </g>
    </MapCanvas>
  );
}

function PanelBackdrop() {
  return (
    <Backdrop viewBox="0 0 763 816" preserveAspectRatio="xMinYMin slice" aria-hidden="true">
      <defs>
        <filter id="soft" x="-10%" y="-10%" width="120%" height="120%">
          <feGaussianBlur stdDeviation="9" />
        </filter>
      </defs>
      <g filter="url(#soft)">
        <path
          d="M150 190l150 80h100l40-80-60-70zM610 150l130-20 20 150-160-60zM740 260h30v150h-30zM200 770h190v60H200z"
          fill="#1a272d"
          opacity="0.8"
        />
        <g fill="none" stroke="#334148" strokeWidth="15" opacity="0.5">
          <path d="M0 80l130 90 230 110M0 280l120-90 5-200M130 0l120 70M440-10l-70 80M450 130l-80 150M430 160l330 160M590-10l180 140M520 0l120 170" />
          <path d="M735 330l40 60M735 600l40 40M735 770l40-120M0 790l340-20 420 60M130 760l-10 60M350 760v60M640 740l130 70" />
          <path d="M5 280v540" />
        </g>
      </g>
    </Backdrop>
  );
}

/* ---------- Icons ---------- */

const SidebarIcon = () => (
  <svg width="34" height="25" viewBox="0 0 34 25" fill="none" stroke="currentColor" strokeWidth="2">
    <rect x="1" y="1" width="32" height="23" rx="2" />
    <path d="M13 1v23M4 6h6M4 10h6M4 14h6" />
  </svg>
);

const Chevron = ({ d }: { d: string }) => (
  <svg width="14" height="25" viewBox="0 0 14 25" fill="none" stroke="currentColor" strokeWidth="2.500" strokeLinecap="round" strokeLinejoin="round">
    <path d={d} />
  </svg>
);

const ShieldIcon = () => (
  <svg width="23" height="28" viewBox="0 0 23 28">
    <path d="M11.500 1.500C9 3.500 5 5 1.500 5v10c0 6 6 9.500 10 11.500 4-2 10-5.500 10-11.500V5C18 5 14 3.500 11.500 1.500z" fill="none" stroke="currentColor" strokeWidth="2" />
    <path d="M12 2C9 4 5 5 1.500 5v10c0 6 6 9.500 10.500 11.500z" fill="currentColor" />
  </svg>
);

const LockIcon = () => (
  <svg width="14" height="19" viewBox="0 0 14 19">
    <rect y="8" width="14" height="11" rx="2" fill="currentColor" />
    <path d="M3 9V5a4 4 0 0 1 8 0v4" fill="none" stroke="currentColor" strokeWidth="2" />
  </svg>
);

const ReloadIcon = () => (
  <svg width="22" height="26" viewBox="0 0 22 26" fill="none" stroke="currentColor" strokeWidth="2" strokeLinecap="round" strokeLinejoin="round">
    <path d="M19.500 11.500A9.500 9.500 0 1 1 12 6M9 1l5 5.500L9 11" />
  </svg>
);

const DownloadIcon = () => (
  <svg width="28" height="28" viewBox="0 0 28 28" fill="none" stroke="currentColor" strokeWidth="2" strokeLinecap="round" strokeLinejoin="round">
    <circle cx="14" cy="14" r="12.500" />
    <path d="M14 8v11M9.500 15l4.500 4.500 4.500-4.500" />
  </svg>
);

const PlusIcon = () => (
  <svg width="24" height="24" viewBox="0 0 24 24" stroke="currentColor" strokeWidth="2.500">
    <path d="M12 1v22M1 12h22" />
  </svg>
);

const TabsIcon = () => (
  <svg width="28" height="28" viewBox="0 0 28 28" fill="none" stroke="currentColor" strokeWidth="2" strokeLinejoin="round">
    <path d="M8 21H4a3 3 0 0 1-3-3V4a3 3 0 0 1 3-3h13a3 3 0 0 1 3 3v3" />
    <rect x="8" y="7" width="19" height="20" rx="3" />
  </svg>
);

const SearchIcon = () => (
  <svg width="35" height="35" viewBox="0 0 35 35" fill="none" stroke="currentColor" strokeWidth="3" strokeLinecap="round">
    <circle cx="16.500" cy="16.500" r="14.500" />
    <path d="M27 27l6 6" />
  </svg>
);

const FilterIcon = () => (
  <svg width="34" height="36" viewBox="0 0 34 36" fill="none" stroke="#ffffff" strokeWidth="3.500" strokeLinecap="round">
    <path d="M3.500 2.500v2M3.500 21v12.500M16.500 2.500v11M16.500 30.500v3M31 2.500v7M31 24.500v9" />
    <g fill="#ffffff" stroke="none">
      <circle cx="3.500" cy="12.500" r="3.500" />
      <circle cx="16.500" cy="22.500" r="3.500" />
      <circle cx="31" cy="17.500" r="3.500" />
    </g>
  </svg>
);

/* ---------- Screen ---------- */

export default function App() {
  return (
    <>
      <GlobalStyle />
      <Stage>
        <Bezel>
          <Browser>
            <Toolbar>
              <ToolbarLeft>
                <Lights>
                  <Light $color="#ff5f5c" aria-label="Close" />
                  <Light $color="#ffbd4c" aria-label="Minimise" />
                  <Light $color="#23ce57" aria-label="Zoom" />
                </Lights>
                <IconButton aria-label="Show sidebar">
                  <SidebarIcon />
                </IconButton>
                <NavButtons>
                  <IconButton aria-label="Back">
                    <Chevron d="M12 2L2 12.500 12 23" />
                  </IconButton>
                  <IconButton aria-label="Forward" $dim>
                    <Chevron d="M2 2l10 10.500L2 23" />
                  </IconButton>
                </NavButtons>
                <IconButton aria-label="Privacy report">
                  <ShieldIcon />
                </IconButton>
              </ToolbarLeft>
              <AddressBar>
                <AddressLabel>
                  <LockIcon />
                  <AddressInput aria-label="Address" defaultValue="haven.com" />
                </AddressLabel>
                <ReloadSlot>
                  <IconButton aria-label="Reload">
                    <ReloadIcon />
                  </IconButton>
                </ReloadSlot>
              </AddressBar>
              <ToolbarRight>
                <IconButton aria-label="Downloads">
                  <DownloadIcon />
                </IconButton>
                <IconButton aria-label="New tab">
                  <PlusIcon />
                </IconButton>
                <IconButton aria-label="Tab overview">
                  <TabsIcon />
                </IconButton>
              </ToolbarRight>
            </Toolbar>
            <AppShell>
              <Sidebar>
                <Brand href="#">HAVEN</Brand>
              </Sidebar>
              <Panel>
                <PanelBackdrop />
                <PanelBody>
                  <SearchRow onSubmit={(e) => e.preventDefault()}>
                    <SearchField>
                      <SearchIcon />
                      <SearchInput aria-label="Search adress" placeholder="Search adress..." />
                    </SearchField>
                    <FilterButton type="button" aria-label="Filters">
                      <FilterIcon />
                    </FilterButton>
                  </SearchRow>
                  <Address>Franklin D. Roosevelt ,75008 Paris</Address>
                  <ScoreCard>
                    <CardHeader>
                      <CardTitle>Score d'habitabilité</CardTitle>
                      <MoreButton aria-label="More">
                        <Dot />
                        <Dot />
                        <Dot />
                      </MoreButton>
                    </CardHeader>
                    <GaugeArea>
                      <GaugeArc viewBox="0 0 334 334" aria-hidden="true">
                        <defs>
                          <linearGradient id="arc" gradientUnits="userSpaceOnUse" x1="0" y1="0" x2="0" y2="308">
                            <stop offset="0" stopColor="#04d39b" />
                            <stop offset="1" stopColor="#04d39b" stopOpacity="0" />
                          </linearGradient>
                        </defs>
                        <path
                          d="M111 313A156 156 0 1 1 301 87"
                          fill="none"
                          stroke="url(#arc)"
                          strokeWidth="21"
                          strokeLinecap="round"
                        />
                      </GaugeArc>
                      <Readout>
                        <ScoreValue>9.3</ScoreValue>
                        <ScoreScale>Sur 10</ScoreScale>
                      </Readout>
                    </GaugeArea>
                  </ScoreCard>
                  <NextCard />
                </PanelBody>
              </Panel>
              <CityMap />
            </AppShell>
          </Browser>
        </Bezel>
      </Stage>
    </>
  );
}
